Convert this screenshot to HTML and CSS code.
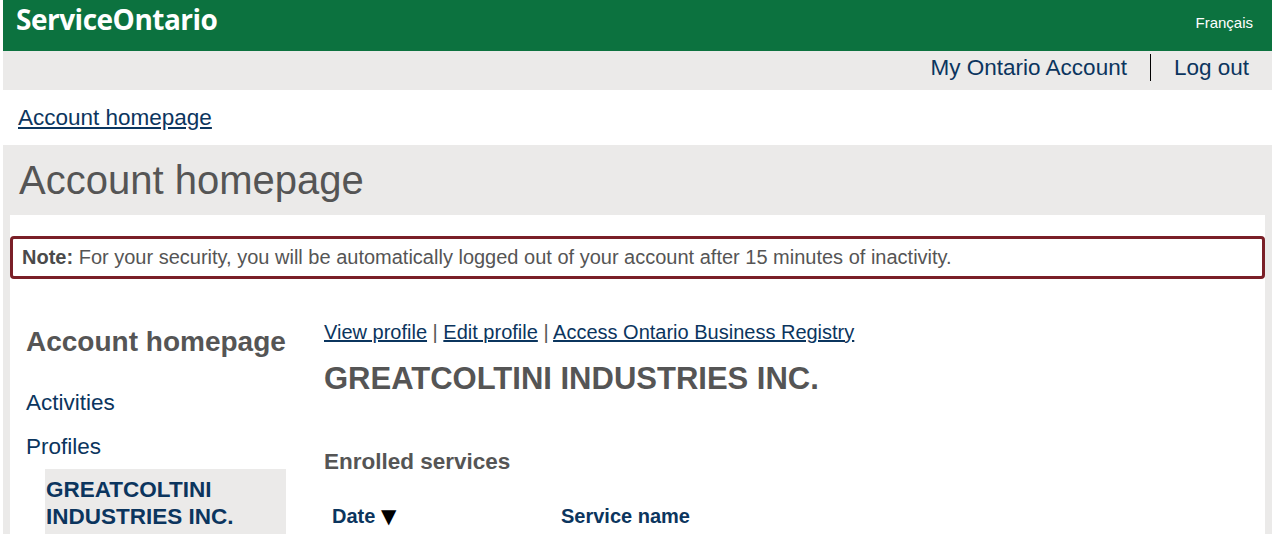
FILE: index.html
```html
<!DOCTYPE html>
<html lang="en">
<head>
<meta charset="utf-8">
<title>Account homepage - ServiceOntario</title>
<link rel="stylesheet" href="styles.css">
</head>
<body>
<div class="page">
  <header class="topbar">
    <span class="logo">ServiceOntario</span>
    <a class="lang" href="#">Français</a>
  </header>
  <nav class="utility">
    <a class="utility-link" href="#">My Ontario Account</a>
    <a class="utility-link utility-link--sep" href="#">Log out</a>
  </nav>
  <div class="crumbs"><a href="#">Account homepage</a></div>
  <section class="shell">
    <h1 class="page-title">Account homepage</h1>
    <div class="panel">
      <p class="note"><strong>Note:</strong> For your security, you will be automatically logged out of your account after 15 minutes of inactivity.</p>
      <div class="columns">
        <aside class="sidenav">
          <h2 class="sidenav-title">Account homepage</h2>
          <ul class="sidenav-list">
            <li class="sidenav-item"><a href="#">Activities</a></li>
            <li class="sidenav-item"><a href="#">Profiles</a>
              <ul class="sidenav-sub">
                <li class="sidenav-current">GREATCOLTINI INDUSTRIES INC.</li>
              </ul>
            </li>
          </ul>
        </aside>
        <main class="content">
          <p class="actions"><a href="#">View profile</a> | <a href="#">Edit profile</a> | <a href="#">Access Ontario Business Registry</a></p>
          <h2 class="org-name">GREATCOLTINI INDUSTRIES INC.</h2>
          <h3 class="section-title">Enrolled services</h3>
          <table class="services">
            <thead>
              <tr><th class="col-date">Date <span class="sort-arrow">▼</span></th><th class="col-name">Service name</th></tr>
            </thead>
          </table>
        </main>
      </div>
    </div>
  </section>
</div>
</body>
</html>
```

FILE: styles.css
```css
* { box-sizing: border-box; }
html, body { margin: 0; padding: 0; background: #fff; }
body {
  font-family: "Liberation Sans", Arial, sans-serif;
  color: #555;
}
a { color: #0b355e; }

.page {
  width: 1269px;
  margin-left: 3px;
}

.topbar {
  height: 51px;
  background: #0c723f;
  display: flex;
  justify-content: space-between;
  align-items: flex-start;
  padding: 5px 19px 0 13px;
}
.logo {
  font-family: "Open Sans", sans-serif;
  font-weight: 700;
  font-size: 28px;
  line-height: 28px;
  color: #fff;
  letter-spacing: -0.5px;
}
.lang {
  margin-top: 9px;
  font-size: 15px;
  line-height: 17px;
  color: #fff;
  text-decoration: none;
}

.utility {
  height: 39px;
  background: #ebeae9;
  display: flex;
  justify-content: flex-end;
  align-items: flex-start;
  padding-top: 3px;
}
.utility-link {
  font-size: 22.5px;
  line-height: 27px;
  padding: 0 23px;
  text-decoration: none;
  color: #0b355e;
}
.utility-link--sep { border-left: 1px solid #000; }

.crumbs {
  padding: 15px 0 14px 15px;
  font-size: 22.5px;
  line-height: 26px;
}

.shell {
  background: #ebeae9;
  padding: 0 7px;
}
.page-title {
  margin: 0;
  padding: 11px 0 11px 9px;
  font-size: 40px;
  line-height: 48px;
  font-weight: 400;
  color: #555;
}
.panel {
  background: #fff;
  padding: 21px 0 20px;
}
.note {
  margin: 0;
  border: 3px solid #7a1f27;
  border-radius: 4px;
  padding: 7px 9px;
  font-size: 20px;
  line-height: 23px;
  color: #555;
}
.note strong { color: #4a4a4a; }

.columns {
  display: flex;
  gap: 38px;
  margin-top: 41px;
  padding-left: 16px;
}
.sidenav {
  width: 260px;
  flex: none;
  padding-top: 5px;
}
.sidenav-title {
  margin: 0 0 31px;
  font-size: 28px;
  line-height: 34px;
  font-weight: 700;
  color: #555;
}
.sidenav-list, .sidenav-sub {
  list-style: none;
  margin: 0;
  padding: 0;
}
.sidenav-item {
  font-size: 22.5px;
  line-height: 26px;
  margin-bottom: 18px;
}
.sidenav-item a { text-decoration: none; }
.sidenav-sub {
  margin: 9px 0 0 19px;
}
.sidenav-current {
  background: #ebeae9;
  padding: 7px 10px 4px 1px;
  font-size: 22.5px;
  line-height: 27px;
  font-weight: 700;
  color: #0b355e;
}

.content { flex: 1; }
.actions {
  margin: 0;
  font-size: 20px;
  line-height: 24px;
  color: #555;
}
.org-name {
  margin: 17px 0 0;
  font-size: 31px;
  line-height: 36px;
  font-weight: 700;
  color: #555;
}
.section-title {
  margin: 52px 0 0;
  font-size: 22.5px;
  line-height: 26px;
  font-weight: 700;
  color: #555;
}
.services {
  margin-top: 29px;
  border-collapse: collapse;
}
.services th {
  text-align: left;
  font-size: 20px;
  line-height: 24px;
  font-weight: 700;
  color: #0b355e;
  padding: 0 8px;
}
.col-date { width: 229px; }
.sort-arrow {
  font-family: "DejaVu Sans", sans-serif;
  font-size: 20px;
  color: #000;
}
```
